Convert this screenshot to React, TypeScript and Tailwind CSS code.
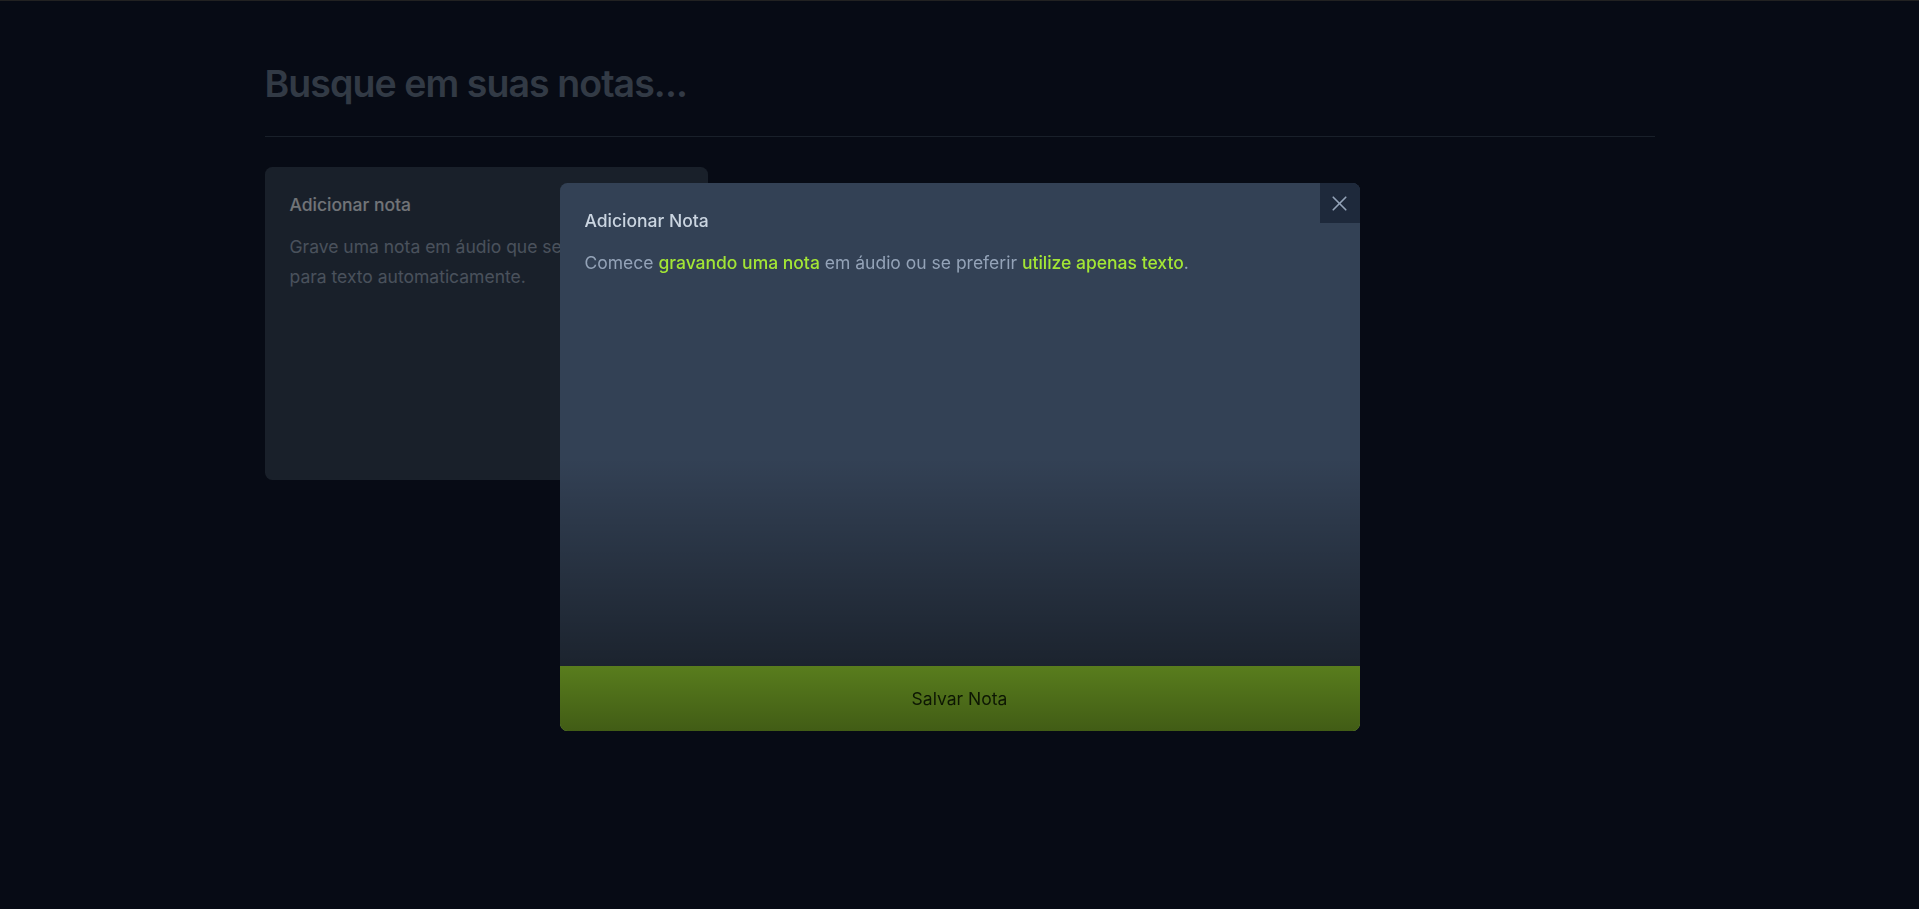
import React from "react";
import { X } from "lucide-react";

function AddNoteCard() {
  return (
    <button className="flex flex-col gap-[15px] rounded-[7.5px] bg-[#334155] p-[25px] text-left outline-none">
      <span className="text-[17.5px] leading-[25px] font-medium text-[#e2e8f0]">
        Adicionar nota
      </span>
      <p className="text-[17.5px] leading-[30px] text-[#94a3b8]">
        Grave uma nota em áudio que será convertida para texto automaticamente.
      </p>
    </button>
  );
}

function NewNoteDialog() {
  return (
    <>
      {/* overlay */}
      <div className="fixed inset-0 bg-black/50" />
      <div className="fixed left-1/2 top-[183px] flex h-[548px] w-[800px] -translate-x-1/2 flex-col overflow-hidden rounded-[7.5px] bg-[#334155]">
        <button className="absolute right-0 top-0 z-10 flex h-[40px] w-[40px] items-center justify-center bg-[#1e293b] text-[#94a3b8]">
          <X size={25} strokeWidth={1.6} />
        </button>
        <form className="flex flex-1 flex-col">
          <div className="flex flex-1 flex-col gap-[15px] p-[25px]">
            <span className="text-[17.5px] leading-[25px] font-medium text-[#cbd5e1]">
              Adicionar Nota
            </span>
            <p className="text-[17.5px] leading-[30px] text-[#94a3b8]">
              Comece{" "}
              <span className="font-medium text-[#a3e635]">gravando uma nota</span>{" "}
              em áudio ou se preferir{" "}
              <span className="font-medium text-[#a3e635]">utilize apenas texto</span>.
            </p>
          </div>
          <button
            type="button"
            className="w-full bg-[#a3e635] py-[20px] text-center text-[17.5px] leading-[25px] font-normal text-[#1a2e05] outline-none"
          >
            Salvar Nota
          </button>
        </form>
        {/* bottom fade */}
        <div className="pointer-events-none absolute bottom-0 left-0 right-0 h-1/2 bg-gradient-to-t from-black/60 to-black/0" />
      </div>
    </>
  );
}

export default function App() {
  return (
    <div className="min-h-[909px] border-t border-[#444444] bg-[#0f172a] font-['Inter',sans-serif]">
      <div className="mx-auto my-[60px] flex max-w-[1440px] flex-col gap-[30px] px-[25px]">
        <form>
          <input
            type="text"
            placeholder="Busque em suas notas..."
            className="w-full bg-transparent text-[37.5px] leading-[45px] font-semibold tracking-tight outline-none placeholder:text-[#64748b]"
          />
        </form>
        <div className="h-px bg-[#334155]" />
        <div className="grid auto-rows-[313px] grid-cols-3 gap-[30px]">
          <AddNoteCard />
        </div>
      </div>
      <NewNoteDialog />
    </div>
  );
}
